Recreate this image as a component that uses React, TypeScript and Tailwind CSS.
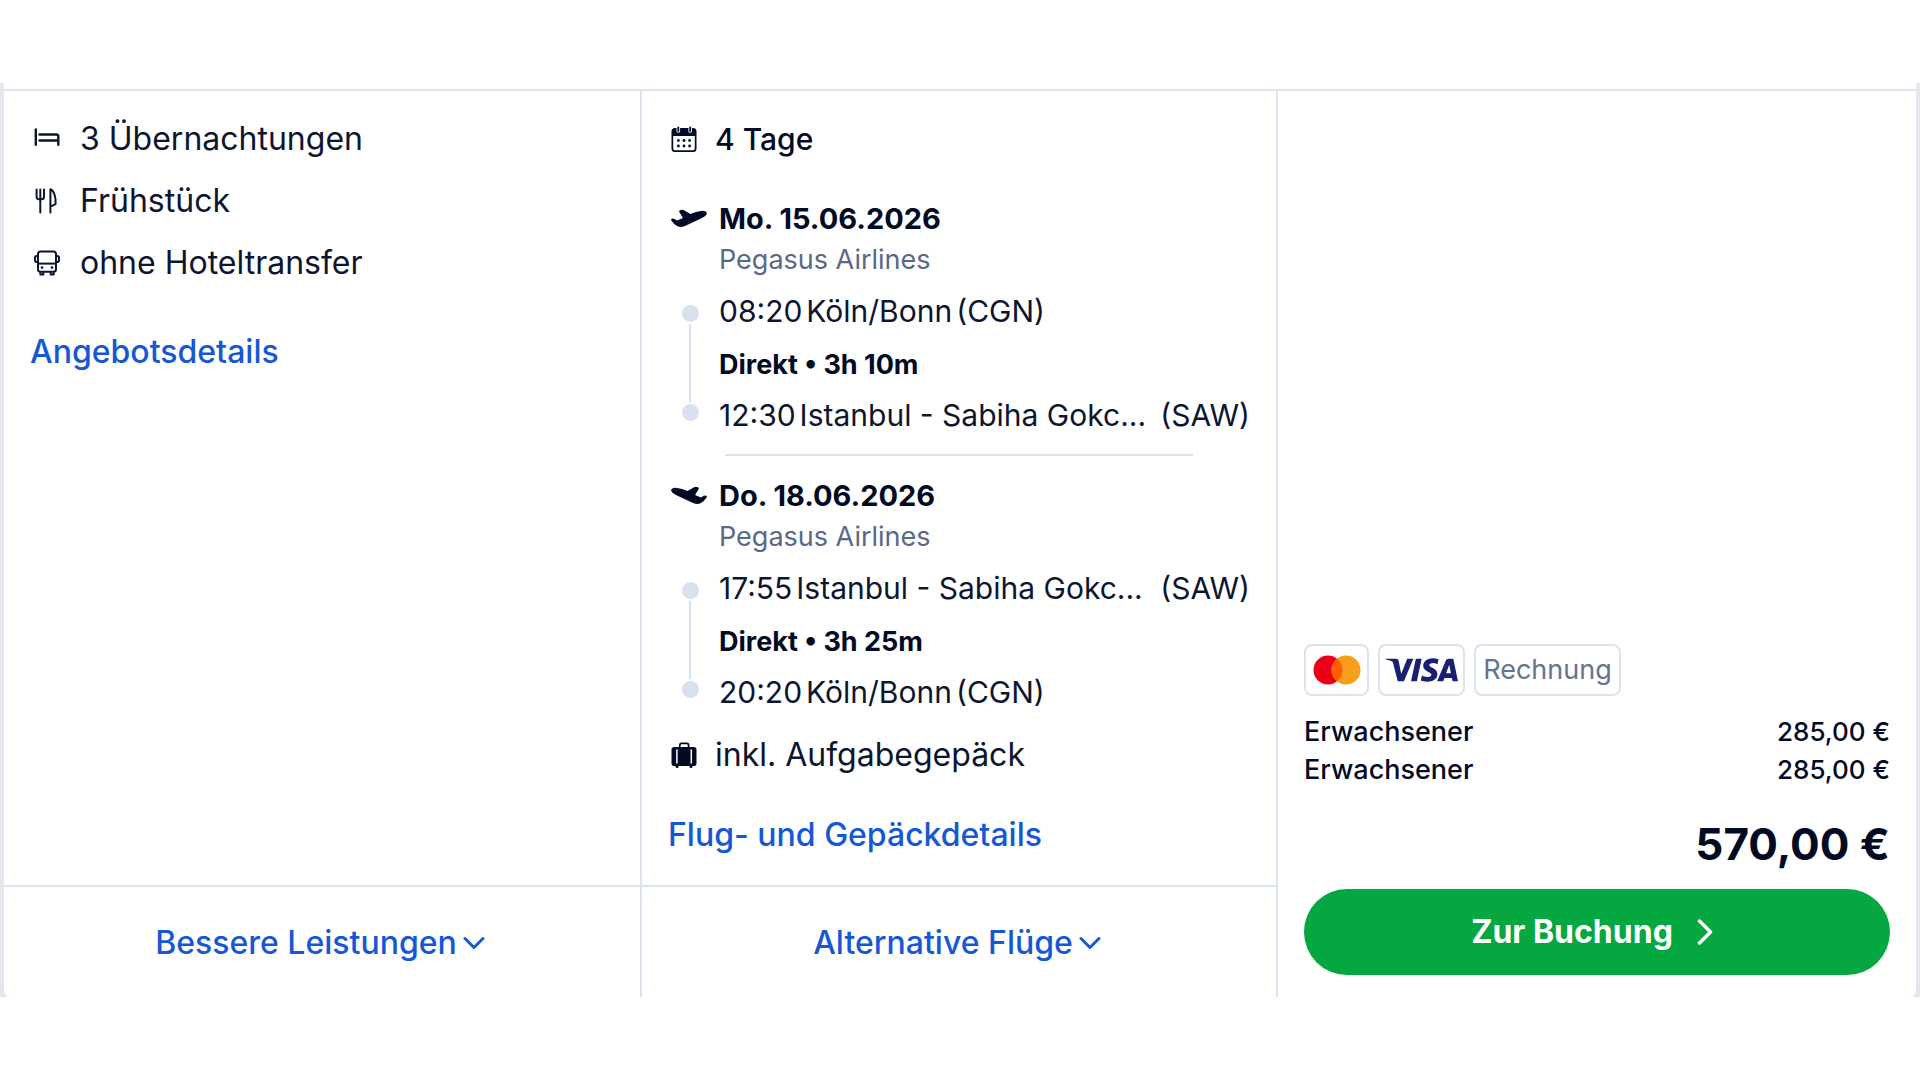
import { ReactNode } from "react";
import { SiVisa } from "react-icons/si";

type Stop = {
  time: string;
  place: string;
  code: string;
};

type Flight = {
  direction: "outbound" | "inbound";
  date: string;
  airline: string;
  duration: string;
  from: Stop;
  to: Stop;
};

const flights: Flight[] = [
  {
    direction: "outbound",
    date: "Mo. 15.06.2026",
    airline: "Pegasus Airlines",
    duration: "3h 10m",
    from: { time: "08:20", place: "Köln/Bonn", code: "CGN" },
    to: { time: "12:30", place: "Istanbul - Sabiha Gokc...", code: "SAW" },
  },
  {
    direction: "inbound",
    date: "Do. 18.06.2026",
    airline: "Pegasus Airlines",
    duration: "3h 25m",
    from: { time: "17:55", place: "Istanbul - Sabiha Gokc...", code: "SAW" },
    to: { time: "20:20", place: "Köln/Bonn", code: "CGN" },
  },
];

const travellers = [
  { id: 1, label: "Erwachsener", price: "285,00 €" },
  { id: 2, label: "Erwachsener", price: "285,00 €" },
];

function BedIcon() {
  return (
    <svg viewBox="0 0 26 26" className="size-[26px] shrink-0" fill="none" stroke="currentColor" strokeWidth="2.4" strokeLinecap="round" strokeLinejoin="round">
      <path d="M1.8 3.5v15.2M5.5 8.5h16.8a2 2 0 0 1 2 2v8.2M5.5 14.5h18.5" />
    </svg>
  );
}

function CutleryIcon() {
  return (
    <svg viewBox="0 0 26 26" className="size-[26px] shrink-0" fill="none" stroke="currentColor" strokeWidth="2" strokeLinecap="round" strokeLinejoin="round">
      <path d="M2.6 1.5v7.2a2.6 2.6 0 0 0 2.6 2.6h2.2a2.6 2.6 0 0 0 2.6-2.6V1.5M6.3 1.5v23" />
      <path d="M16.4 24.5V1.2c3.6 1.2 5.6 8 5.2 14.8-1.6 1.2-3.4 1.8-5.2 2.2" />
    </svg>
  );
}

function BusIcon() {
  return (
    <svg viewBox="0 0 26 26" className="size-[26px] shrink-0" fill="none" stroke="currentColor" strokeWidth="2" strokeLinejoin="round">
      <rect x="4" y="1.4" width="18" height="20.4" rx="2.6" />
      <path d="M4 13.6h18" />
      <path d="M4 6H2.8A1.8 1.8 0 0 0 1 7.8v2.4A1.8 1.8 0 0 0 2.8 12H4M22 6h1.2A1.8 1.8 0 0 1 25 7.8v2.4a1.8 1.8 0 0 1-1.8 1.8H22" />
      <path d="M6.3 22.3v2.3h3v-2.3M16.7 22.3v2.3h3v-2.3" />
      <circle cx="8" cy="17.6" r="1.3" fill="currentColor" stroke="none" />
      <circle cx="18" cy="17.6" r="1.3" fill="currentColor" stroke="none" />
    </svg>
  );
}

function CalendarIcon() {
  return (
    <svg viewBox="0 0 26 26" className="size-[26px] shrink-0" fill="currentColor">
      <path
        fillRule="evenodd"
        d="M4 2h18a3.5 3.5 0 0 1 3.5 3.5v17A3.5 3.5 0 0 1 22 26H4a3.5 3.5 0 0 1-3.500-3.500v-17A3.500 3.500 0 0 1 4 2zM2.200 10v12.300a1.900 1.900 0 0 0 1.900 2h17.800a1.900 1.900 0 0 0 1.900-2V10z"
      />
      <path d="M7.3 1.5V5M19.2 1.5V5" stroke="#fff" strokeWidth="3.6" strokeLinecap="round" />
      <path d="M7.3 1.3v3.6M19.2 1.3v3.6" stroke="currentColor" strokeWidth="1.8" strokeLinecap="round" />
      {[7.4, 13, 18.6].map((cx) => (
        <g key={cx}>
          <circle cx={cx} cy="14.5" r="1.4" />
          <circle cx={cx} cy="20" r="1.4" />
        </g>
      ))}
    </svg>
  );
}

function PlaneIcon({ className }: { className?: string }) {
  return (
    <svg viewBox="0 0 36 18" className={`h-[18px] w-9 ${className ?? ""}`} fill="currentColor">
      <path d="M.3 9.9Q1.8 9.100 3 9.800L6.200 11.500 11.900 8.900 8.300 3Q7.800 1.900 9 1.300 10.800.2 12.500 1.100L19.500 4.900Q25 2.300 30 1.900 34 1.600 35.600 3.200 36.400 5 34.500 6.700 33 8 29 10L14 17Q9.500 18.600 6.500 17.300 2.500 15 .2 11.200-.1 10.300.3 9.900z" />
    </svg>
  );
}

function SuitcaseIcon() {
  return (
    <svg viewBox="0 0 26 26" className="size-[26px] shrink-0 text-[#020a24]" fill="currentColor">
      <path d="M8.800 6V3.200a1.800 1.800 0 0 1 1.800-1.800h5.200a1.800 1.800 0 0 1 1.800 1.800V6" fill="none" stroke="currentColor" strokeWidth="1.700" />
      <rect x=".5" y="5" width="25" height="19" rx="2.8" />
      <path d="M4.500 23h3v1.500a1.500 1.500 0 0 1-3 0zM18.500 23h3v1.500a1.500 1.500 0 0 1-3 0z" />
      <path d="M5.900 8v13M20.300 8v13" stroke="#fff" strokeWidth="1.500" strokeLinecap="round" />
    </svg>
  );
}

function ChevronDown() {
  return (
    <svg viewBox="0 0 22 14" className="h-[14px] w-[22px]" fill="none" stroke="currentColor" strokeWidth="3" strokeLinecap="round" strokeLinejoin="round">
      <path d="M2 2.500l9 9 9-9" />
    </svg>
  );
}

function DetailRow({ icon, children }: { icon: ReactNode; children: ReactNode }) {
  return (
    <li className="flex items-center gap-5 pl-1 text-[32px] leading-[36px] text-[#0d1530]">
      {icon}
      {children}
    </li>
  );
}

function StopRow({ stop }: { stop: Stop }) {
  return (
    <p className="flex gap-1 whitespace-nowrap text-[30px] leading-[36px] text-[#0d1530]">
      <span>{stop.time}</span>
      <span>{stop.place}</span>
      <span className={stop.place.endsWith("...") ? "ml-auto" : ""}>({stop.code})</span>
    </p>
  );
}

function FlightInfo({ flight }: { flight: Flight }) {
  return (
    <section className="grid grid-cols-[48px_1fr] pl-[3px]">
      <div className="pt-2">
        <PlaneIcon className={flight.direction === "inbound" ? "-scale-x-100" : ""} />
      </div>
      <div>
        <h3 className="text-[29px] leading-[36px] font-bold">{flight.date}</h3>
        <p className="mt-[7px] text-[27px] leading-[32px] text-[#5a6887]">{flight.airline}</p>
      </div>

      <div className="mt-[17px] flex w-[38px] flex-col items-center gap-0.5 py-3">
        <span className="size-[17px] rounded-full bg-[#d9e0ee]" />
        <span className="w-0.5 flex-1 bg-[#d9e0ee]" />
        <span className="size-[17px] rounded-full bg-[#d9e0ee]" />
      </div>
      <div className="mt-[17px]">
        <StopRow stop={flight.from} />
        <p className="mt-5 mb-4 text-[27px] leading-[32px] font-bold">Direkt • {flight.duration}</p>
        <StopRow stop={flight.to} />
      </div>
    </section>
  );
}

function ToggleButton({ children }: { children: ReactNode }) {
  return (
    <button
      type="button"
      className="flex h-28 w-full items-center justify-center gap-1.5 border-t-2 border-[#dce3f0] pt-0.5 pr-1 text-[32px] leading-[36px] font-medium text-[#1558d6]"
    >
      {children}
      <ChevronDown />
    </button>
  );
}

function PaymentMethods() {
  return (
    <ul className="flex gap-[9px]">
      <li className="flex h-[52px] w-[65px] items-center justify-center rounded-lg border-2 border-[#dce3f0]">
        <svg viewBox="0 0 48 30" className="h-[30px] w-12" role="img" aria-label="Mastercard">
          <circle cx="15" cy="15" r="14.5" fill="#eb001b" />
          <circle cx="33" cy="15" r="14.5" fill="#f79e1b" />
          <path d="M24 3.600a14.500 14.500 0 0 1 0 22.800 14.500 14.500 0 0 1 0-22.800z" fill="#ff5f00" />
        </svg>
      </li>
      <li className="flex h-[52px] w-[87px] items-center justify-center rounded-lg border-2 border-[#dce3f0]">
        <SiVisa viewBox="0 8 24 8" className="h-6 w-[72px] text-[#1a1f71]" aria-label="Visa" />
      </li>
      <li className="flex h-[52px] w-[147px] items-center justify-center rounded-lg border-2 border-[#dce3f0] text-[27px] text-[#66748f]">
        Rechnung
      </li>
    </ul>
  );
}

export default function App() {
  return (
    <main className="bg-white pt-[83px] font-['Inter',sans-serif] text-[#020a24]">
      <div className="bg-[#e5e7ef] px-1">
        <div className="rounded-b-md bg-white pt-1.5">
          <div className="grid grid-cols-[159fr_159fr_160fr] border-t-2 border-[#dce3f0]">
            <div className="flex flex-col">
              <div className="flex-1 px-[26px] pt-[30px]">
                <ul className="space-y-[26px]">
                  <DetailRow icon={<BedIcon />}>3 Übernachtungen</DetailRow>
                  <DetailRow icon={<CutleryIcon />}>Frühstück</DetailRow>
                  <DetailRow icon={<BusIcon />}>ohne Hoteltransfer</DetailRow>
                </ul>
                <a href="#angebot" className="mt-[53px] block text-[32px] leading-[36px] font-medium text-[#1558d6]">
                  Angebotsdetails
                </a>
              </div>
              <ToggleButton>Bessere Leistungen</ToggleButton>
            </div>

            <div className="flex flex-col border-l-2 border-[#dce3f0]">
              <div className="flex-1 px-[26px] pt-[30px] pb-8">
                <p className="flex items-center gap-[18px] pl-[3px] text-[30px] leading-[36px] font-medium">
                  <CalendarIcon />4 Tage
                </p>
                <div className="mt-[44px]">
                  <FlightInfo flight={flights[0]} />
                  <hr className="mx-[57px] mt-[21px] mb-[22px] border-t-2 border-[#dce3f0]" />
                  <FlightInfo flight={flights[1]} />
                </div>
                <p className="mt-[27px] flex items-center gap-[18px] pl-[3px] text-[32px] leading-[36px] text-[#0d1530]">
                  <SuitcaseIcon />
                  inkl. Aufgabegepäck
                </p>
                <a href="#flug" className="mt-[44px] block text-[32px] leading-[36px] font-medium text-[#1558d6]">
                  Flug- und Gepäckdetails
                </a>
              </div>
              <ToggleButton>Alternative Flüge</ToggleButton>
            </div>

            <div className="flex flex-col justify-end border-l-2 border-[#dce3f0] px-[26px] pb-[22px]">
              <PaymentMethods />
              <table className="mt-[17px] w-full leading-[38px] font-medium">
                <tbody>
                  {travellers.map((t) => (
                    <tr key={t.id}>
                      <th scope="row" className="text-left text-[27px] font-medium">
                        {t.label}
                      </th>
                      <td className="text-right text-[26px]">{t.price}</td>
                    </tr>
                  ))}
                </tbody>
              </table>
              <p className="mt-[31px] text-right text-[44px] leading-[48px] font-bold">570,00 €</p>
              <button
                type="button"
                className="mt-[21px] flex h-[86px] w-full items-center justify-center gap-6 rounded-full bg-[#04a740] pr-2.5 text-[32px] font-bold text-white"
              >
                Zur Buchung
                <svg viewBox="0 0 16 26" className="h-[26px] w-4" fill="none" stroke="currentColor" strokeWidth="3.5" strokeLinecap="round" strokeLinejoin="round">
                  <path d="M2.500 2l11 11-11 11" />
                </svg>
              </button>
            </div>
          </div>
        </div>
      </div>
    </main>
  );
}
